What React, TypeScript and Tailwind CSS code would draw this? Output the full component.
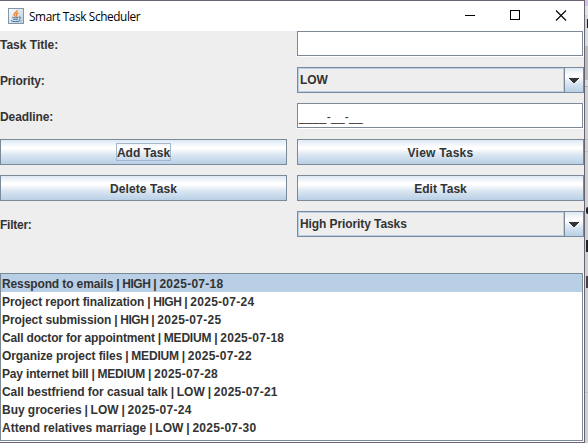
import type { ReactNode } from "react";

type Priority = "HIGH" | "MEDIUM" | "LOW";

const tasks: { title: string; priority: Priority; date: string; spacing: string }[] = [
  { title: "Resspond to emails", priority: "HIGH", date: "2025-07-18", spacing: "tracking-[-0.115px]" },
  { title: "Project report finalization", priority: "HIGH", date: "2025-07-24", spacing: "tracking-[-0.09px]" },
  { title: "Project submission", priority: "HIGH", date: "2025-07-25", spacing: "tracking-[-0.08px]" },
  { title: "Call doctor for appointment", priority: "MEDIUM", date: "2025-07-18", spacing: "tracking-[-0.17px]" },
  { title: "Organize project files", priority: "MEDIUM", date: "2025-07-22", spacing: "tracking-[-0.08px]" },
  { title: "Pay internet bill", priority: "MEDIUM", date: "2025-07-28", spacing: "tracking-[-0.17px]" },
  { title: "Call bestfriend for casual talk", priority: "LOW", date: "2025-07-21", spacing: "tracking-[-0.055px]" },
  { title: "Buy groceries", priority: "LOW", date: "2025-07-24", spacing: "tracking-[-0.04px]" },
  { title: "Attend relatives marriage", priority: "LOW", date: "2025-07-30", spacing: "tracking-[0.01px]" },
];

const prioritySpacing: Record<Priority, string> = {
  HIGH: "tracking-[-0.5px]",
  MEDIUM: "tracking-[-0.2px]",
  LOW: "tracking-[0px]",
};

const metal =
  "bg-[linear-gradient(to_bottom,#dde8f3_0%,#ffffff_30%,#ffffff_36%,#dde8f3_60%,#b8cfe5_100%)]";

function JavaIcon() {
  return (
    <svg width="16" height="16" viewBox="0 0 16 16" fill="none">
      <defs>
        <linearGradient id="tile" x1="0" y1="0" x2="1" y2="1">
          <stop offset="0" stopColor="#ffffff" />
          <stop offset="1" stopColor="#b7cad8" />
        </linearGradient>
      </defs>
      <rect x="0.5" y="0.5" width="15" height="15" fill="url(#tile)" stroke="#8296a5" />
      <path d="M9.2 2.2C9.6 4.2 5.4 4.8 6.1 6.8C6.3 7.5 7.3 8.1 7.2 8.9M10.4 4.8C8.4 5.5 7.8 6.4 8.6 7.2C9 7.7 8.8 8.2 8.2 8.7" stroke="#ee7d27" strokeWidth="1.3" />
      <path d="M4.2 9.2C5.7 10.1 8.8 10 10.4 9.3M5 11C6.5 11.7 8.6 11.7 10 11M3 12.5C4.8 14 10 14 12.5 12.5M11 9C13.3 8.5 13 10.7 11 11.1" stroke="#42729e" strokeWidth="1" />
    </svg>
  );
}

function TitleBar() {
  return (
    <header className="flex h-[30px] items-center bg-white pl-2">
      <JavaIcon />
      <h1 className="ml-[5px] font-['Open_Sans','Noto_Sans',sans-serif] text-[11.8px] leading-[16px] font-normal tracking-[-0.38px] text-black">
        Smart Task Scheduler
      </h1>
      <svg className="ml-auto mr-[13px]" width="106" height="30" viewBox="0 0 106 30" fill="none" stroke="#000" shapeRendering="crispEdges">
        <path d="M0 14.5H10" />
        <rect x="45.5" y="9.5" width="9" height="9" />
        <path d="M91 9.5L101 19.5M101 9.5L91 19.5" shapeRendering="auto" strokeWidth="1.1" />
      </svg>
    </header>
  );
}

function Label({ children, spacing = "" }: { children?: ReactNode; spacing?: string }) {
  return (
    <div className={`flex h-[26px] items-center pt-px leading-[16px] ${spacing}`}>{children}</div>
  );
}

function TextField({ children }: { children?: ReactNode }) {
  return (
    <div className="h-[26px] bg-white pr-px pb-px">
      <div className="flex h-[25px] items-center border border-[#7a8a99] pl-px pt-[2px] font-normal tracking-[0.26px]">
        {children}
      </div>
    </div>
  );
}

function ComboBox({ children }: { children: ReactNode }) {
  return (
    <div className="flex h-[26px] border border-[#7a8a99]">
      <div className="flex flex-1 items-center border border-[#b8cfe5] pl-px tracking-[-0.09px]">
        {children}
      </div>
      <div className={`flex w-[19px] items-start justify-center border-l border-[#7a8a99] pt-[10px] ${metal}`}>
        <svg width="10" height="5" viewBox="0 0 10 5" shapeRendering="crispEdges">
          <path d="M0 0H10V1H9V2H8V3H7V4H6V5H4V4H3V3H2V2H1V1H0Z" fill="#333" />
        </svg>
      </div>
    </div>
  );
}

function Button({ children, focused, spacing = "" }: { children: ReactNode; focused?: boolean; spacing?: string }) {
  return (
    <button className={`flex h-[26px] items-center justify-center border border-[#7a8a99] ${metal}`}>
      <span
        className={`border pt-[2px] leading-[14px] ${spacing} ${focused ? "border-[#a3b8cc]" : "border-transparent"}`}
      >
        {children}
      </span>
    </button>
  );
}

function Backdrop() {
  return (
    <aside className="flex w-[3px] flex-col overflow-hidden bg-[#d1d1d1]">
      <div className="h-[6px] bg-[#d5c1ed]" />
      <div className="h-[9px] bg-[#e3e3e3]" />
      <div className="h-[4px] bg-[#d7d7d7]" />
      <div className="h-[9px] w-px self-end bg-[#202020]" />
      <div className="h-[18px] bg-[#dcdcdc]" />
      <div className="h-[34px] bg-[#bcbcbc]" />
      <div className="h-[6px] bg-[#dadada]" />
      <div className="h-px bg-[#b2b2b2]" />
      <div className="h-[52px]" />
      <div className="h-px bg-[#bdbdbd]" />
      <div className="h-[11px]" />
      <div className="h-px bg-[#bdbdbd]" />
      <div className="h-[55px]" />
      <div className="h-[7px] w-[2px] self-end rounded-l bg-[#202020]" />
      <div className="h-[26px]" />
      <div className="h-[12px] w-[2px] self-end bg-[#242424]" />
      <div className="h-[24px]" />
      <div className="h-[12px] w-[2px] self-end bg-[#444]" />
      <div className="h-[104px]" />
      <div className="h-px bg-[#bdbdbd]" />
    </aside>
  );
}

export default function App() {
  return (
    <div className="flex h-[443px] w-[588px] overflow-hidden bg-[#d1d1d1] font-['Liberation_Sans',Arial,sans-serif] text-[12px] font-bold text-[#333]">
      <main className="flex w-[585px] flex-col border-t border-r border-b border-[#6b6470] bg-[#eee]">
        <TitleBar />
        <section className="grid grid-cols-2 gap-[10px]">
          <Label>Task Title:</Label>
          <TextField />
          <Label spacing="tracking-[-0.15px]">Priority:</Label>
          <ComboBox>LOW</ComboBox>
          <Label spacing="tracking-[-0.1px]">Deadline:</Label>
          <TextField>____-__-__</TextField>
          <Button focused>Add Task</Button>
          <Button spacing="tracking-[0.22px]">View Tasks</Button>
          <Button spacing="tracking-[0.12px]">Delete Task</Button>
          <Button>Edit Task</Button>
          <Label spacing="tracking-[-0.25px]">Filter:</Label>
          <ComboBox>High Priority Tasks</ComboBox>
          <Label />
          <Label />
        </section>
        <section className="h-[169px] bg-white pr-px pb-px">
          <ul className="h-[168px] border border-[#7a8a99]">
            {tasks.map((task, i) => (
              <li
                key={task.title}
                className={`h-[18px] whitespace-nowrap pl-px pt-px leading-[18px] tracking-[-0.33px] ${i === 0 ? "bg-[#b8cfe5]" : ""}`}
              >
                <span className={task.spacing}>{task.title}</span>
                {" | "}
                <span className={prioritySpacing[task.priority]}>{task.priority}</span>
                {" | "}
                <span className="tracking-[0.26px]">{task.date}</span>
              </li>
            ))}
          </ul>
        </section>
      </main>
      <Backdrop />
    </div>
  );
}
